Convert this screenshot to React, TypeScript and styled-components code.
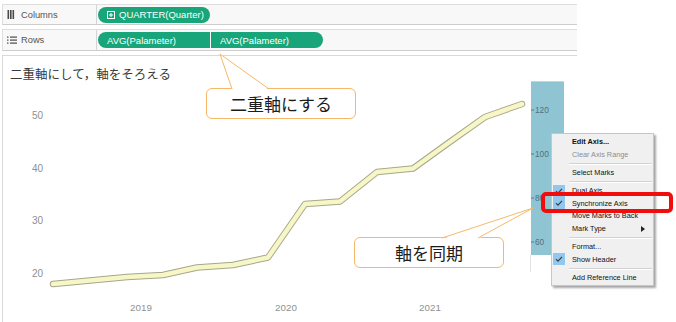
import React from 'react'
import styled, { createGlobalStyle } from 'styled-components'

const GlobalStyle = createGlobalStyle`
  html, body {
    margin: 0;
    padding: 0;
    background: #ffffff;
  }
  body {
    font-family: 'Liberation Sans', 'Noto Sans CJK JP', sans-serif;
  }
`

const Page = styled.div`
  position: relative;
  width: 676px;
  height: 322px;
  overflow: hidden;
  background: #ffffff;
`
const Workspace = styled.div`
  display: flex;
  flex-direction: column;
  gap: 4px;
  width: 575px;
  margin-left: 2px;
  padding-top: 4px;
`
const Shelf = styled.div<{ $h: number }>`
  display: flex;
  height: ${p => p.$h}px;
  box-sizing: border-box;
  background: #f8f8f8;
  border-top: 1px solid #dedede;
  border-bottom: 1px solid #cdcdcd;
  border-left: 1px solid #e0e0e0;
`
const ShelfLabel = styled.div`
  display: flex;
  align-items: center;
  gap: 4px;
  width: 94px;
  padding-left: 4px;
  box-sizing: border-box;
  border-right: 1px solid #d4d4d4;
  font-size: 9.3px;
  color: #555555;

  & > svg {
    width: 10px;
    flex: none;
  }
`
const PillArea = styled.div`
  display: flex;
  align-items: center;
  gap: 1px;
  padding-left: 1px;
`
const Pill = styled.div<{ $shape: 'full' | 'left' | 'right' }>`
  display: flex;
  align-items: center;
  gap: 4px;
  width: 112px;
  height: 16px;
  box-sizing: border-box;
  padding-left: 9px;
  background: #18a57a;
  color: #ffffff;
  font-size: 9.5px;
  white-space: nowrap;
  border-radius: ${p => (p.$shape === 'full' ? '8px' : p.$shape === 'left' ? '8px 0 0 8px' : '0 8px 8px 0')};
`
const ChartPanel = styled.div`
  height: 267px;
  box-sizing: border-box;
  border-top: 1px solid #d9d9d9;
  border-left: 1px solid #d9d9d9;
`
const ChartTitle = styled.div`
  padding: 10px 0 0 7px;
  height: 25px;
  box-sizing: border-box;
  line-height: 15px;
  font-family: 'Noto Sans CJK JP', sans-serif;
  font-size: 12.5px;
  color: #3a3a3a;
`
const ChartCanvas = styled.svg`
  display: block;
  width: 574px;
  height: 241px;
`

const CalloutBox = styled.div<{ $x: number; $y: number }>`
  position: absolute;
  left: ${p => p.$x}px;
  top: ${p => p.$y}px;
  width: 150px;
  height: 31px;
  box-sizing: border-box;
  border: 1px solid #f6b868;
  border-radius: 6px;
  background: #ffffff;
  display: flex;
  align-items: center;
  justify-content: center;
  font-family: 'Noto Sans CJK JP', sans-serif;
  font-size: 17px;
  color: #1c1c1c;
`
const Tail = styled.svg`
  position: absolute;
  left: -1px;
  top: -1px;
  width: 1px;
  height: 1px;
  overflow: visible;
`
const CalloutText = styled.span`
  position: relative;
`

const Menu = styled.div`
  position: absolute;
  left: 551px;
  top: 133px;
  width: 103px;
  box-sizing: border-box;
  padding: 1.5px 0 1px;
  background: #f0f0f0;
  border: 1px solid #c6c6c6;
  box-shadow: 2px 2px 2px rgba(0, 0, 0, 0.35);
  font-family: 'Liberation Sans', sans-serif;
  font-size: 7.3px;
`
const MenuItem = styled.div<{ $disabled?: boolean; $bold?: boolean }>`
  display: flex;
  align-items: center;
  height: 12.7px;
  color: ${p => (p.$disabled ? '#8d8d8d' : '#111111')};
  font-weight: ${p => (p.$bold ? 700 : 400)};
  white-space: nowrap;
`
const CheckCell = styled.div<{ $on?: boolean }>`
  display: flex;
  align-items: center;
  justify-content: center;
  width: 12px;
  height: 12px;
  margin-left: 1px;
  margin-right: 7px;
  background: ${p => (p.$on ? '#92c7f0' : 'transparent')};
`
const SubArrow = styled.svg`
  margin-left: auto;
  margin-right: 8px;
`
const MenuSeparator = styled.div`
  height: 5.3px;
  display: flex;
  align-items: center;
  padding-left: 17px;
  padding-right: 1px;

  &::after {
    content: '';
    flex: 1;
    height: 1px;
    background: #d2d2d2;
    box-shadow: 0 1px 0 #ffffff;
  }
`
const Highlight = styled.div`
  position: absolute;
  left: 541px;
  top: 192px;
  width: 132px;
  height: 21px;
  box-sizing: border-box;
  border: 4px solid #f20d0d;
  border-radius: 5px;
`

const linePoints: [number, number][] = [
  [53, 284], [90, 280.5], [127, 277], [163, 275], [197, 267.5], [233, 265],
  [268, 257.5], [305, 204], [340, 201.5], [377, 172], [413, 168.5], [449, 142.5],
  [485, 117], [522, 104],
]

const leftTicks = [
  { label: '50', y: 119 },
  { label: '40', y: 172 },
  { label: '30', y: 224 },
  { label: '20', y: 277 },
]
const rightTicks = [
  { label: '120', y: 113 },
  { label: '100', y: 157 },
  { label: '80', y: 201 },
  { label: '60', y: 245 },
]
const years = [
  { label: '2019', x: 141 },
  { label: '2020', x: 286 },
  { label: '2021', x: 430 },
]

type Item =
  | { kind: 'sep' }
  | { kind: 'item'; label: string; checked?: boolean; disabled?: boolean; bold?: boolean; sub?: boolean }

const menuItems: Item[] = [
  { kind: 'item', label: 'Edit Axis...', bold: true },
  { kind: 'item', label: 'Clear Axis Range', disabled: true },
  { kind: 'sep' },
  { kind: 'item', label: 'Select Marks' },
  { kind: 'sep' },
  { kind: 'item', label: 'Dual Axis', checked: true },
  { kind: 'item', label: 'Synchronize Axis', checked: true },
  { kind: 'item', label: 'Move Marks to Back' },
  { kind: 'item', label: 'Mark Type', sub: true },
  { kind: 'sep' },
  { kind: 'item', label: 'Format...' },
  { kind: 'item', label: 'Show Header', checked: true },
  { kind: 'sep' },
  { kind: 'item', label: 'Add Reference Line' },
]

const ColumnsIcon = () => (
  <svg height="9" viewBox="0 0 10 9">
    <rect x="0.5" y="0" width="1.6" height="9" fill="#4a4a4a" />
    <rect x="3" y="0" width="1.6" height="9" fill="#4a4a4a" />
    <rect x="5.5" y="0" width="1.6" height="9" fill="#4a4a4a" />
  </svg>
)
const RowsIcon = () => (
  <svg height="8" viewBox="0 0 10 8">
    {[0.5, 3.5, 6.5].map(y => (
      <g key={y}>
        <rect x="0" y={y} width="1.5" height="1.2" fill="#4a4a4a" />
        <rect x="3" y={y} width="7" height="1.2" fill="#4a4a4a" />
      </g>
    ))}
  </svg>
)
const PlusBox = () => (
  <svg width="8" height="8" viewBox="0 0 8 8">
    <rect x="0.5" y="0.5" width="7" height="7" fill="none" stroke="#fff" strokeWidth="1" />
    <path d="M4 2v4M2 4h4" stroke="#fff" strokeWidth="1" />
  </svg>
)
const Check = () => (
  <svg width="12" height="12" viewBox="0 0 12 12">
    <polyline points="3,6.2 5,8.2 9,3.8" fill="none" stroke="#3a3a3a" strokeWidth="1.1" />
  </svg>
)

const Callout = ({ x, y, tip, base, children }: { x: number; y: number; tip: [number, number]; base: [number, number]; children: React.ReactNode }) => (
  <CalloutBox $x={x} $y={y}>
    <Tail>
      <polygon points={`${base[0]},2 ${tip[0]},${tip[1]} ${base[1]},2`} fill="#ffffff" />
      <polyline points={`${base[0]},1 ${tip[0]},${tip[1]} ${base[1]},1`} fill="none" stroke="#f6b868" strokeWidth="1" />
    </Tail>
    <CalloutText>{children}</CalloutText>
  </CalloutBox>
)

const Chart = () => {
  const d = linePoints.map(([x, y], i) => `${i === 0 ? 'M' : 'L'}${x} ${y}`).join(' ')
  return (
    <ChartCanvas viewBox="3 81 574 241">
      {leftTicks.map(t => (
        <text key={t.label} x="43" y={t.y} textAnchor="end" fontSize="10" fill="#909090" fontFamily="Liberation Sans, sans-serif">{t.label}</text>
      ))}
      {years.map(t => (
        <text key={t.label} x={t.x} y="311" textAnchor="middle" fontSize="9.8" fill="#909090" fontFamily="Liberation Sans, sans-serif">{t.label}</text>
      ))}
      <rect x="531" y="81" width="33" height="174" fill="#8fc5d3" />
      <line x1="531" y1="81.5" x2="564" y2="81.5" stroke="#b5dbe5" />
      <line x1="530.5" y1="255" x2="530.5" y2="272" stroke="#e3e3e3" />
      {rightTicks.map(t => (
        <g key={t.label}>
          <line x1="531" y1={t.y - 3} x2="534" y2={t.y - 3} stroke="#4d6570" strokeWidth="0.8" />
          <text x="535" y={t.y} fontSize="8.3" fill="#52707a" fontFamily="Liberation Sans, sans-serif">{t.label}</text>
        </g>
      ))}
      <path d={d} fill="none" stroke="#a7a78a" strokeWidth="6.5" strokeLinecap="round" strokeLinejoin="round" />
      <path d={d} fill="none" stroke="#f6f6c6" strokeWidth="4.6" strokeLinecap="round" strokeLinejoin="round" />
    </ChartCanvas>
  )
}

const App = () => (
  <Page>
    <GlobalStyle />
    <Workspace>
      <Shelf $h={21}>
        <ShelfLabel><ColumnsIcon />Columns</ShelfLabel>
        <PillArea>
          <Pill $shape="full"><PlusBox />QUARTER(Quarter)</Pill>
        </PillArea>
      </Shelf>
      <Shelf $h={22}>
        <ShelfLabel><RowsIcon />Rows</ShelfLabel>
        <PillArea>
          <Pill $shape="left">AVG(Palameter)</Pill>
          <Pill $shape="right">AVG(Palameter)</Pill>
        </PillArea>
      </Shelf>
      <ChartPanel>
        <ChartTitle>二重軸にして，軸をそろえる</ChartTitle>
        <Chart />
      </ChartPanel>
    </Workspace>

    <Callout x={206} y={88} tip={[14, -34]} base={[26, 63]}>二重軸にする</Callout>
    <Callout x={354} y={237} tip={[179, -29]} base={[88, 124]}>軸を同期</Callout>

    <Menu>
      {menuItems.map((it, i) =>
        it.kind === 'sep' ? (
          <MenuSeparator key={i} />
        ) : (
          <MenuItem key={i} $disabled={it.disabled} $bold={it.bold}>
            <CheckCell $on={it.checked}>{it.checked && <Check />}</CheckCell>
            {it.label}
            {it.sub && (
              <SubArrow width="4" height="6" viewBox="0 0 4 6">
                <polygon points="0,0 4,3 0,6" fill="#222" />
              </SubArrow>
            )}
          </MenuItem>
        )
      )}
    </Menu>
    <Highlight />
  </Page>
)

export default App
